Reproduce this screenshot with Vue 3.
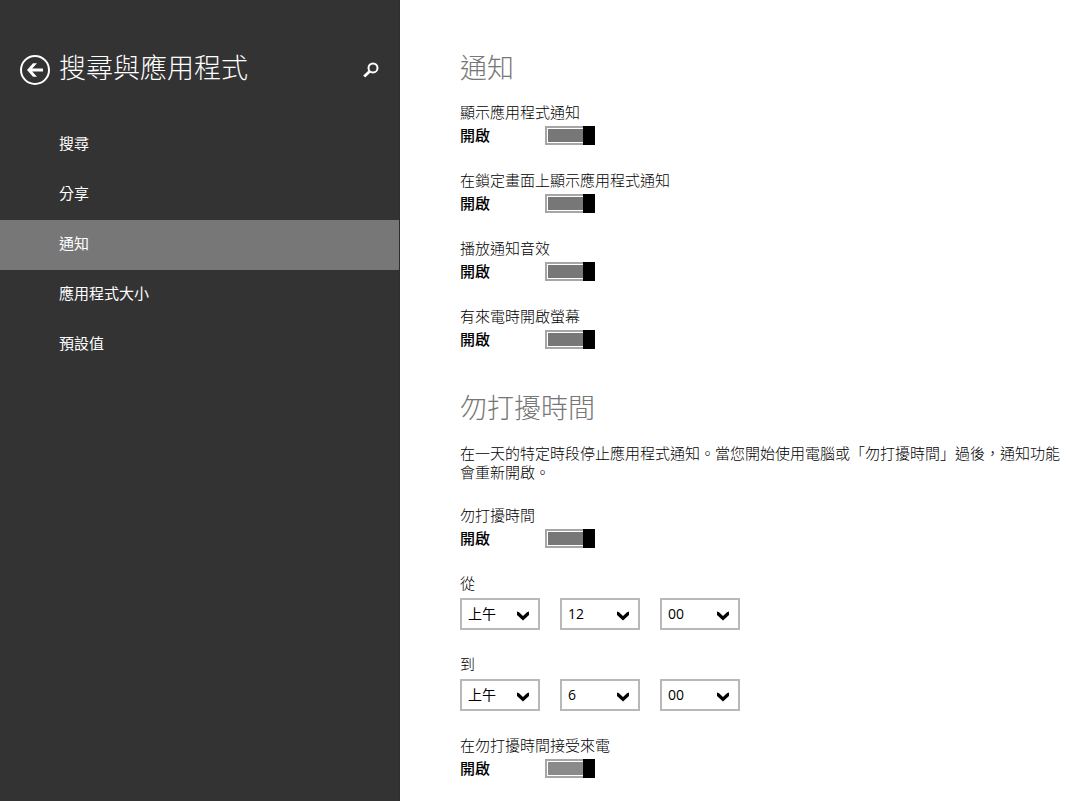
<template>
  <div class="settings">
    <!-- 左側導覽 -->
    <aside class="sidebar">
      <header class="sidebar-header">
        <button type="button" class="icon-btn back-btn" aria-label="返回">
          <svg width="30" height="30" viewBox="0 0 30 30" aria-hidden="true">
            <circle cx="15" cy="15" r="14" fill="none" stroke="#fff" stroke-width="2" />
            <path d="M7 15L13 8.2H17L12.2 13.5H23V16.5H12.2L17 21.8H13Z" fill="#fff" />
          </svg>
        </button>
        <h1 class="sidebar-title">搜尋與應用程式</h1>
        <button type="button" class="icon-btn search-btn" aria-label="搜尋設定">
          <svg width="16" height="16" viewBox="0 0 16 16" aria-hidden="true">
            <circle cx="10" cy="5.9" r="4.5" fill="none" stroke="#fff" stroke-width="2" />
            <path d="M6.8 9.2L1.2 14.6" fill="none" stroke="#fff" stroke-width="2.8" />
          </svg>
        </button>
      </header>

      <nav class="nav">
        <a
          v-for="item in navItems"
          :key="item"
          href="#"
          class="nav-item"
          :class="{ active: item === current }"
          @click.prevent="current = item"
        >{{ item }}</a>
      </nav>
    </aside>

    <main class="content">
      <!-- 通知 -->
      <section class="section">
        <h2 class="section-title">通知</h2>
        <div v-for="item in notifications" :key="item.id" class="field">
          <label :for="item.id" class="field-label">{{ item.label }}</label>
          <div class="toggle-row">
            <span class="toggle-state">{{ stateText(item.on) }}</span>
            <input :id="item.id" v-model="item.on" type="checkbox" class="toggle" />
          </div>
        </div>
      </section>

      <!-- 勿打擾時間 -->
      <section class="section">
        <h2 class="section-title">勿打擾時間</h2>
        <p class="section-desc">在一天的特定時段停止應用程式通知。當您開始使用電腦或「勿打擾時間」過後，通知功能會重新開啟。</p>

        <div class="field">
          <label for="quiet" class="field-label">勿打擾時間</label>
          <div class="toggle-row">
            <span class="toggle-state">{{ stateText(quiet) }}</span>
            <input id="quiet" v-model="quiet" type="checkbox" class="toggle" />
          </div>
        </div>

        <div v-for="time in times" :key="time.id" class="field time-field">
          <label :for="time.id + '-period'" class="field-label">{{ time.label }}</label>
          <div class="time-row">
            <div v-for="part in parts" :key="part.key" class="select-box">
              <select
                :id="time.id + '-' + part.key"
                v-model="time[part.key]"
                class="select"
                :aria-label="time.label + part.name"
              >
                <option v-for="opt in part.options" :key="opt" :value="opt">{{ opt }}</option>
              </select>
              <svg class="select-arrow" width="14" height="10" viewBox="0 0 14 10" aria-hidden="true">
                <path d="M1 0.6L3 1.2L7 5L11 1.2L13 0.6V4L7 9.6L1 4Z" fill="#000" />
              </svg>
            </div>
          </div>
        </div>

        <div class="field">
          <label for="calls" class="field-label">在勿打擾時間接受來電</label>
          <div class="toggle-row">
            <span class="toggle-state">{{ stateText(calls) }}</span>
            <input id="calls" v-model="calls" type="checkbox" class="toggle toggle-light" />
          </div>
        </div>
      </section>
    </main>
  </div>
</template>

<script setup>
import { ref } from 'vue'

const navItems = ['搜尋', '分享', '通知', '應用程式大小', '預設值']
const current = ref('通知')

const notifications = ref([
  { id: 'app', label: '顯示應用程式通知', on: true },
  { id: 'lock', label: '在鎖定畫面上顯示應用程式通知', on: true },
  { id: 'sound', label: '播放通知音效', on: true },
  { id: 'wake', label: '有來電時開啟螢幕', on: true }
])

const quiet = ref(true)
const calls = ref(true)

const times = ref([
  { id: 'from', label: '從', period: '上午', hour: '12', minute: '00' },
  { id: 'to', label: '到', period: '上午', hour: '6', minute: '00' }
])

// 時間選擇的三個下拉選單
const parts = [
  { key: 'period', name: '時段', options: ['上午', '下午'] },
  { key: 'hour', name: '小時', options: ['12', '1', '2', '3', '4', '5', '6', '7', '8', '9', '10', '11'] },
  { key: 'minute', name: '分鐘', options: ['00', '15', '30', '45'] }
]

function stateText(on) {
  return on ? '開啟' : '關閉'
}
</script>

<style>
body {
  margin: 0;
  background: #fff;
}
</style>

<style scoped>
.settings {
  display: flex;
  min-height: 100vh;
  font-family: "Open Sans", "Noto Sans CJK TC", sans-serif;
  font-size: 15px;
  line-height: 20px;
  color: #000;
}

/* 左側導覽 */
.sidebar {
  flex: 0 0 400px;
  box-sizing: border-box;
  border-right: 1px solid #2e2e2e;
  background: #333;
  color: #fff;
}
.sidebar-header {
  display: flex;
  align-items: center;
  height: 40px;
  padding: 50px 20px 30px;
}
.icon-btn {
  display: flex;
  padding: 0;
  border: none;
  background: none;
  cursor: pointer;
}
.sidebar-title {
  flex: 1;
  margin: 0 0 4px 9px;
  font-size: 27px;
  font-weight: 300;
  line-height: 36px;
}
.nav {
  display: flex;
  flex-direction: column;
}
.nav-item {
  padding: 13px 59px 17px;
  color: #fff;
  text-decoration: none;
}
.nav-item.active {
  background: #777;
}

/* 右側內容 */
.content {
  flex: 1;
  min-width: 0;
  padding: 50px 5px 23px 60px;
}
.section + .section {
  margin-top: 41px;
}
.section-title {
  margin: 0 0 16px;
  font-size: 27px;
  font-weight: 300;
  line-height: 36px;
  color: #777;
}
.section-desc {
  margin: 18px 0 23px;
  line-height: 19px;
  font-weight: 300;
}
.field + .field {
  margin-top: 25px;
}
.time-field + .field {
  margin-top: 24px;
}
.field-label {
  display: block;
  font-weight: 300;
}

/* 開關 */
.toggle-row {
  display: flex;
  align-items: flex-start;
  height: 19px;
  margin-top: 4px;
}
.toggle-state {
  width: 85px;
  line-height: 18px;
  font-weight: 500;
}
.toggle {
  appearance: none;
  display: flex;
  justify-content: flex-start;
  box-sizing: border-box;
  width: 50px;
  height: 19px;
  margin: 0;
  background: #a6a6a6;
  box-shadow: inset 0 0 0 2px #a6a6a6, inset 0 0 0 3px #fff;
  cursor: pointer;
}
.toggle::after {
  content: "";
  width: 12px;
  background: #000;
}
.toggle:checked {
  justify-content: flex-end;
  background: #777;
}
.toggle-light:checked {
  background: #8a8a8a;
}

/* 時間下拉選單 */
.time-row {
  display: flex;
  gap: 20px;
  margin-top: 5px;
}
.select-box {
  position: relative;
  width: 80px;
}
.select {
  appearance: none;
  box-sizing: border-box;
  display: block;
  width: 100%;
  height: 32px;
  padding: 0 24px 0 6px;
  border: 2px solid #b8b8b8;
  border-radius: 0;
  background: #fff;
  color: #000;
  font: inherit;
  font-size: 14px;
}
.select-arrow {
  position: absolute;
  top: 13px;
  right: 10px;
  pointer-events: none;
}
</style>
